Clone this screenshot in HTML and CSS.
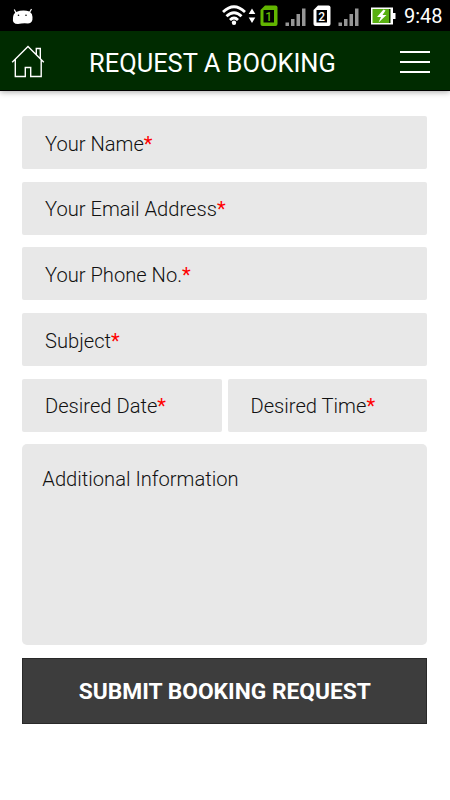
FILE: index.html
```html
<!DOCTYPE html>
<html lang="en">
<head>
<meta charset="utf-8">
<title>Request a Booking</title>
<link rel="stylesheet" href="styles.css">
</head>
<body>
<div class="status">
  <svg class="droid" width="22" height="20" viewBox="0 0 22 20"><path d="M4 4Q1 6 1 10Q0 16 6 16Q11 15 16 15.500Q21 15 20.500 9Q20 5 17.500 3.500Q11 1.500 4 4Z" fill="#fff"/><path d="M4 5L2.300 1.500M17.500 4.500L19.500 1" stroke="#fff" stroke-width="1.200"/><circle cx="6.500" cy="7.200" r=".8" fill="#000"/><circle cx="14" cy="7.200" r=".8" fill="#000"/></svg>
  <svg class="wifi" width="26" height="22" viewBox="0 0 26 22" fill="none" stroke="#fff" stroke-width="2.800"><path d="M2 8Q13 -2.500 24 8M5.500 12.300Q13 5 20.500 12.300M9 16Q13 12 17 16"/><circle cx="13" cy="18.700" r="2.200" fill="#fff" stroke="none"/></svg>
  <svg class="updown" width="8" height="16" viewBox="0 0 8 16" fill="#fff"><path d="M.7 6L4 .5L7.300 6ZM.7 9.500L4 15L7.300 9.500Z"/></svg>
  <svg class="sim" width="18" height="22" viewBox="0 0 18 22"><path d="M5 .5H15.500Q17.500 .5 17.500 2.500V19Q17.500 21 15.500 21H2.500Q.5 21 .5 19V5Z" fill="#62b500"/><rect x="3.500" y="5" width="10.500" height="12.500" fill="#000"/><text x="8.700" y="15.700" fill="#62b500">1</text></svg>
  <svg class="signal" width="22" height="20" viewBox="0 0 22 20" fill="#969696"><path d="M.5 15.500h3.500v3.500H.5zM6 12h3.500v7H6zM11.500 7h3.500v12h-3.500zM17 1.500h3.500v17.500H17z"/></svg>
  <svg class="sim" width="18" height="22" viewBox="0 0 18 22"><path d="M5 .5H15.500Q17.500 .5 17.500 2.500V19Q17.500 21 15.500 21H2.500Q.5 21 .5 19V5Z" fill="#fff"/><rect x="3.500" y="5" width="10.500" height="12.500" fill="#000"/><text x="8.700" y="15.700" fill="#fff">2</text></svg>
  <svg class="signal" width="22" height="20" viewBox="0 0 22 20" fill="#969696"><path d="M.5 15.500h3.500v3.500H.5zM6 12h3.500v7H6zM11.500 7h3.500v12h-3.500zM17 1.500h3.500v17.500H17z"/></svg>
  <svg class="battery" width="25" height="18" viewBox="0 0 25 18"><path d="M0 .5H22V6H24.500V12H22V17.500H0Z" fill="#fff"/><path d="M1.500 2H18V16H1.500Z" fill="#58b010"/><path d="M18 2H19.500V16H18Z" fill="#183800"/><path d="M12.500 2.500L6 10H10L7.500 15.500L15.500 8H11.500L14.500 3.500Z" fill="#fff"/></svg>
  <span class="clock">9:48</span>
</div>
<header class="bar">
  <svg class="home" width="34" height="34" viewBox="0 0 34 34" fill="none" stroke="#fff" stroke-width="1.400"><path d="M1.200 17.300L17 1.500L32.800 17.300M4.300 14.500V31.500H14.300V22.500H19.700V31.500H30.200V14.500M25.300 9.500V3.500H29.300V13.500"/></svg>
  <h1>REQUEST A BOOKING</h1>
  <div class="menu"><i></i><i></i><i></i></div>
</header>
<main class="form">
  <div class="field"><span>Your Name<b>*</b></span></div>
  <div class="field"><span>Your Email Address<b>*</b></span></div>
  <div class="field"><span>Your Phone No.<b>*</b></span></div>
  <div class="field"><span>Subject<b>*</b></span></div>
  <div class="pair">
    <div class="field"><span>Desired Date<b>*</b></span></div>
    <div class="field"><span>Desired Time<b>*</b></span></div>
  </div>
  <div class="field notes"><span>Additional Information</span></div>
  <button class="submit" type="button">SUBMIT BOOKING REQUEST</button>
</main>
</body>
</html>
```
FILE: styles.css
```css
* { box-sizing: border-box; }
body { margin: 0; width: 450px; height: 800px; overflow: hidden; background: #fff; font-family: Roboto, sans-serif; }
svg { display: block; flex: none; }
.status { height: 31px; background: #000; display: flex; align-items: flex-start; padding-left: 12px; color: #fff; }
.droid { margin-top: 8px; }
.wifi { margin: 4px 0 0 187px; }
.updown { margin: 8px 0 0 1px; }
.sim { margin: 5px 0 0 4px; }
.sim text { font: 500 12px Roboto, sans-serif; text-anchor: middle; }
.signal { margin: 7px 0 0 7px; }
.signal + .sim { margin-left: 6px; }
.battery { margin: 7px 0 0 11px; }
.clock { margin: 4px 0 0 8px; font-size: 20px; line-height: 24px; }
.bar { position: relative; height: 60px; background: #002b00; border-bottom: 1px solid #000; box-shadow: 0 1px 6px rgba(0,0,0,.35); display: flex; align-items: center; padding: 0 20px 0 11px; }
.bar h1 { margin: 4px 0 0 44px; color: #fff; font-size: 25.450px; font-weight: 400; line-height: 30px; white-space: nowrap; width: 246px; }
.home { margin-top: 2px; }
.menu { width: 30px; margin: 2px 0 0 auto; display: flex; flex-direction: column; gap: 8px; }
.menu i { height: 2px; background: #fff; }
.form { padding: 25.200px 22.700px 0 22.300px; display: flex; flex-direction: column; gap: 12.650px; }
.field { height: 53px; flex: none; background: #e8e8e8; border-radius: 2px; padding-left: 22.700px; display: flex; align-items: center; font-size: 20.150px; line-height: 24px; font-weight: 300; color: #111; white-space: nowrap; }
.field span { position: relative; top: 1px; }
.field b { color: #f00; font-weight: 400; }
.pair { display: flex; gap: 6px; }
.pair .field { flex: 1; }
.notes { height: 201px; border-radius: 5px; padding: 21.500px 0 0 20px; align-items: flex-start; }
.submit { height: 65.500px; border: 1px solid #292929; border-radius: 0; background: #3d3d3d; color: #fff; font: 700 22.750px Roboto, sans-serif; padding: 2px 0 0; }
```
